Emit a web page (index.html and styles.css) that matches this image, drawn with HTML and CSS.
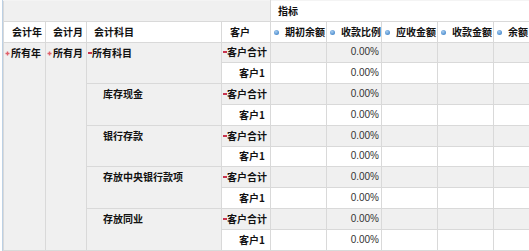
FILE: index.html
```html
<!DOCTYPE html>
<html>
<head>
<meta charset="utf-8">
<link rel="stylesheet" href="styles.css">
</head>
<body>
<div class="frame">
<table class="grid">
  <colgroup>
    <col class="w-year"><col class="w-month"><col class="w-subj"><col class="w-cust">
    <col class="w-m1"><col class="w-m2"><col class="w-m3"><col class="w-m4"><col class="w-m5">
  </colgroup>
  <tr class="r-top">
    <td colspan="4" class="corner"></td>
    <td colspan="5" class="measure-title">指标</td>
  </tr>
  <tr class="r-head">
    <th class="h-year">会计年</th>
    <th class="h-month">会计月</th>
    <th class="h-subj">会计科目</th>
    <th class="h-cust">客户</th>
    <th class="h-m"><span class="dot"></span>期初余额</th>
    <th class="h-m"><span class="dot"></span>收款比例</th>
    <th class="h-m"><span class="dot"></span>应收金额</th>
    <th class="h-m"><span class="dot"></span>收款金额</th>
    <th class="h-m"><span class="dot"></span>余额</th>
  </tr>

  <tr class="sum">
    <td rowspan="10" class="tree"><svg class="plus" viewBox="0 0 5 5" width="5" height="5"><path d="M2.5 0.5V4.5M0.5 2.5H4.5" stroke="#e0606a" stroke-width="1.4"/></svg>所有年</td>
    <td rowspan="10" class="tree"><svg class="plus" viewBox="0 0 5 5" width="5" height="5"><path d="M2.5 0.5V4.5M0.5 2.5H4.5" stroke="#e0606a" stroke-width="1.4"/></svg>所有月</td>
    <td rowspan="2" class="tree"><span class="minus"></span>所有科目</td>
    <td class="cust-sum"><span class="minus"></span>客户合计</td>
    <td></td><td class="num">0.00%</td><td></td><td></td><td></td>
  </tr>
  <tr class="leaf">
    <td class="cust-leaf">客户1</td>
    <td></td><td class="num">0.00%</td><td></td><td></td><td></td>
  </tr>

  <tr class="sum">
    <td rowspan="2" class="tree sub">库存现金</td>
    <td class="cust-sum"><span class="minus"></span>客户合计</td>
    <td></td><td class="num">0.00%</td><td></td><td></td><td></td>
  </tr>
  <tr class="leaf">
    <td class="cust-leaf">客户1</td>
    <td></td><td class="num">0.00%</td><td></td><td></td><td></td>
  </tr>

  <tr class="sum">
    <td rowspan="2" class="tree sub">银行存款</td>
    <td class="cust-sum"><span class="minus"></span>客户合计</td>
    <td></td><td class="num">0.00%</td><td></td><td></td><td></td>
  </tr>
  <tr class="leaf">
    <td class="cust-leaf">客户1</td>
    <td></td><td class="num">0.00%</td><td></td><td></td><td></td>
  </tr>

  <tr class="sum">
    <td rowspan="2" class="tree sub">存放中央银行款项</td>
    <td class="cust-sum"><span class="minus"></span>客户合计</td>
    <td></td><td class="num">0.00%</td><td></td><td></td><td></td>
  </tr>
  <tr class="leaf">
    <td class="cust-leaf">客户1</td>
    <td></td><td class="num">0.00%</td><td></td><td></td><td></td>
  </tr>

  <tr class="sum">
    <td rowspan="2" class="tree sub">存放同业</td>
    <td class="cust-sum"><span class="minus"></span>客户合计</td>
    <td></td><td class="num">0.00%</td><td></td><td></td><td></td>
  </tr>
  <tr class="leaf">
    <td class="cust-leaf">客户1</td>
    <td></td><td class="num">0.00%</td><td></td><td></td><td></td>
  </tr>
</table>
</div>
</body>
</html>
```
FILE: styles.css
```css
html, body {
  margin: 0;
  padding: 0;
  background: #ffffff;
  overflow: hidden;
  width: 529px;
  height: 251px;
}
.frame {
  margin-left: 2px;
  border-left: 1px solid #bcd0e4;
  height: 251px;
  overflow: hidden;
}
.grid {
  border-collapse: collapse;
  table-layout: fixed;
  width: 546px;
  font-family: "Noto Sans CJK SC", "Liberation Sans", sans-serif;
  font-size: 10px;
  color: #111111;
}
.w-year { width: 42px; }
.w-month { width: 41px; }
.w-subj { width: 135px; }
.w-cust { width: 49px; }
.w-m1 { width: 56px; }
.w-m2 { width: 55px; }
.w-m3 { width: 56px; }
.w-m4 { width: 56px; }
.w-m5 { width: 56px; }

.grid td, .grid th {
  border: 1px solid #d9d9d9;
  height: 19.8px;
  padding: 0;
  line-height: 12px;
  white-space: nowrap;
  overflow: hidden;
  font-weight: 700;
  text-align: left;
}
.r-top td { border-top-color: #f4f4f4; }
.grid .corner { background: #f0f0f0; }
.grid .measure-title {
  background: #ffffff;
  padding-left: 7px;
}
.r-head th { background: #ffffff; }
.grid .h-year, .grid .h-month { text-align: right; padding-right: 3px; }
.grid .h-subj { padding-left: 7px; }
.grid .h-cust { padding-left: 8px; }
.grid .h-m { padding-left: 3px; }
.dot {
  display: inline-block;
  width: 5px;
  height: 5px;
  border-radius: 50%;
  background: radial-gradient(circle at 40% 35%, #a9cdf0 0%, #4f8fcf 70%, #3f7dbd 100%);
  margin-right: 6px;
  vertical-align: 1px;
}
.grid .tree {
  background: #f0f0f0;
  vertical-align: top;
  padding-top: 4px;
  padding-left: 1px;
}
.grid .tree.sub { padding-left: 16px; }
.plus {
  display: inline-block;
  vertical-align: 1px;
  margin-right: 1px;
}
.minus {
  display: inline-block;
  width: 4px;
  height: 2px;
  background: #c8344e;
  vertical-align: 3px;
}
.sum td { background: #f0f0f0; }
.grid .cust-sum { padding-left: 1px; }
.leaf td { background: #ffffff; }
.grid .cust-leaf { text-align: right; padding-right: 5px; }
.grid .num {
  text-align: right;
  padding-right: 2px;
  font-family: "Liberation Sans", Arial, sans-serif;
  font-weight: 400;
  color: #333333;
}
```
